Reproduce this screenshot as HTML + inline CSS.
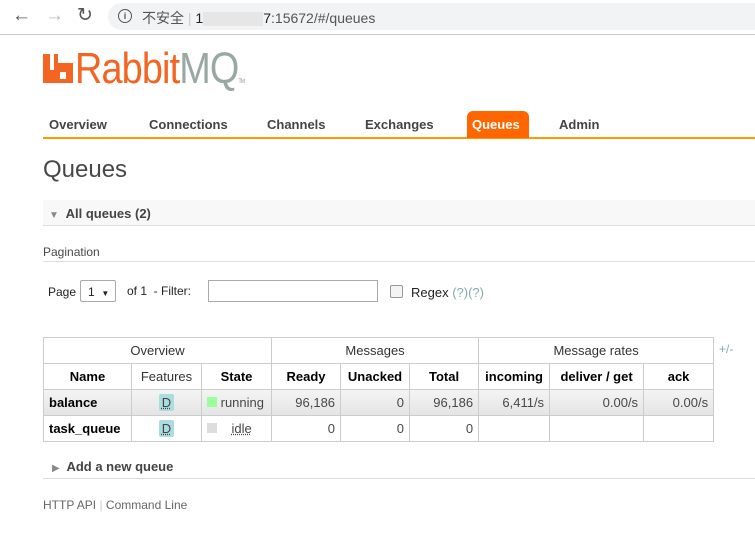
<!DOCTYPE html><html><head><style>
body{margin:0;width:755px;height:538px;background:#fff;font-family:"Liberation Sans","DejaVu Sans",sans-serif;position:relative;overflow:hidden;color:#484848}
.a{position:absolute}
.nav{font-weight:bold;font-size:13px;color:#444}
table{border-collapse:collapse;position:absolute;left:43px;top:337px;font-size:13px;table-layout:fixed;width:670px}
td,th{border:1px solid #ccc;padding:0 5px;height:26px;box-sizing:border-box;white-space:nowrap;overflow:hidden}
th{font-weight:bold;color:#000}
.g th{font-weight:normal;color:#333}
.r{text-align:right}
.d{display:inline-block;background:#aadde0;color:#444;padding:1px 3px;border-radius:2px;text-decoration:underline dotted}
</style></head><body>
<div class="a" style="left:0;top:0;width:755px;height:34px;background:#fff;border-bottom:1px solid #ccc"></div>
<div class="a" style="left:108px;top:3px;width:660px;height:27px;border-radius:14px;background:#f1f3f4"></div>
<div class="a" style="left:12px;top:5px;font-size:19px;color:#555">&#8592;</div>
<div class="a" style="left:45px;top:5px;font-size:19px;color:#bbb">&#8594;</div>
<div class="a" style="left:77px;top:4px;font-size:19px;color:#555">&#8635;</div>
<div class="a" style="left:118px;top:9px;width:12px;height:12px;border:1.5px solid #555;border-radius:50%;font-size:9px;text-align:center;line-height:12px;font-weight:bold;color:#555">i</div>
<div class="a" style="left:142px;top:8px;font-size:14px;color:#555;font-family:'Liberation Sans','Noto Sans CJK SC',sans-serif">不安全 <span style="color:#ccc">|</span> <span style="color:#222">1</span><span style="display:inline-block;width:60px;height:14px;background:#e6e6e6;vertical-align:middle"></span><span style="color:#222">7</span>:15672/#/queues</div>
<svg class="a" style="left:43px;top:54px" width="30" height="30" viewBox="0 0 30 30"><path d="M0 0H7V16H11V0H15V9H30V29H0Z" fill="#f26522"/><rect x="17" y="18" width="6" height="7" fill="#fff"/></svg>
<div class="a" style="left:75px;top:44px;font-size:44px;color:#f26522;letter-spacing:-1px;transform:scaleX(0.86);transform-origin:0 0">Rabbit<span style="color:#99a8a4">MQ</span><span style="font-size:6px;color:#999">TM</span></div>
<div class="a" style="left:43px;top:137px;width:712px;height:2px;background:#f90"></div>
<div class="a" style="left:467px;top:111px;width:62px;height:27px;background:#f60;border-radius:6px 6px 0 0"></div>
<div class="a nav" style="left:49px;top:117px">Overview</div>
<div class="a nav" style="left:149px;top:117px">Connections</div>
<div class="a nav" style="left:267px;top:117px">Channels</div>
<div class="a nav" style="left:365px;top:117px">Exchanges</div>
<div class="a nav" style="left:472px;top:117px;color:#fff">Queues</div>
<div class="a nav" style="left:559px;top:117px">Admin</div>
<div class="a" style="left:43px;top:156px;font-size:24px;color:#484848">Queues</div>
<div class="a" style="left:43px;top:200px;width:712px;height:25px;background:#f8f8f8;border-bottom:1px solid #ddd"></div>
<div class="a" style="left:49px;top:206px;font-size:13px;font-weight:bold;color:#444"><span style="color:#888;font-size:10px">&#9660;</span>&nbsp; All queues (2)</div>
<div class="a" style="left:43px;top:245px;font-size:12px;color:#484848">Pagination</div>
<div class="a" style="left:43px;top:261px;width:712px;height:1px;background:#ddd"></div>
<div class="a" style="left:48px;top:285px;font-size:12px;color:#222">Page</div>
<div class="a" style="left:80px;top:280px;width:36px;height:22px;border:1px solid #aaa;border-radius:2px;font-size:12px;line-height:22px;box-sizing:border-box;padding-left:7px;color:#222">1 &nbsp;<span style="font-size:8px">&#9660;</span></div>
<div class="a" style="left:127px;top:284px;font-size:12px;color:#222">of 1 &nbsp;- Filter:</div>
<div class="a" style="left:208px;top:280px;width:170px;height:22px;border:1px solid #aaa;box-sizing:border-box"></div>
<div class="a" style="left:390px;top:285px;width:11px;height:11px;border:1px solid #999;border-radius:2px;background:#f4f4f4"></div>
<div class="a" style="left:411px;top:285px;font-size:13px;color:#222">Regex <span style="color:#8aa">(?)(?)</span></div>
<table>
<colgroup><col style="width:88px"><col style="width:70px"><col style="width:70px"><col style="width:69px"><col style="width:69px"><col style="width:69px"><col style="width:71px"><col style="width:94px"><col style="width:70px"></colgroup>
<tr class="g" style="height:25px"><th colspan="3">Overview</th><th colspan="3">Messages</th><th colspan="3">Message rates</th></tr>
<tr><th>Name</th><th style="font-weight:normal;color:#333">Features</th><th>State</th><th>Ready</th><th>Unacked</th><th>Total</th><th>incoming</th><th>deliver / get</th><th>ack</th></tr>
<tr style="background:linear-gradient(#f4f4f4,#e4e4e4)"><td><b style="color:#000">balance</b></td><td style="text-align:center"><span class="d">D</span></td><td><span style="display:inline-block;width:10px;height:10px;background:#9f9"></span> running</td><td class="r">96,186</td><td class="r">0</td><td class="r">96,186</td><td class="r">6,411/s</td><td class="r">0.00/s</td><td class="r">0.00/s</td></tr>
<tr><td><b style="color:#000">task_queue</b></td><td style="text-align:center"><span class="d">D</span></td><td><span style="display:inline-block;width:10px;height:10px;background:#ddd"></span> &nbsp;&nbsp;&nbsp;<span style="text-decoration:underline dotted">idle</span></td><td class="r">0</td><td class="r">0</td><td class="r">0</td><td></td><td></td><td></td></tr>
</table>
<div class="a" style="left:719px;top:342px;font-size:12px;color:#8aa">+/-</div>
<div class="a" style="left:52px;top:459px;font-size:13px;font-weight:bold;color:#444"><span style="color:#888;font-size:10px">&#9654;</span>&nbsp; Add a new queue</div>
<div class="a" style="left:43px;top:478px;width:712px;height:1px;background:#ddd"></div>
<div class="a" style="left:43px;top:498px;font-size:12px;color:#666">HTTP API <span style="color:#ccc">|</span> Command Line</div>
</body></html>
